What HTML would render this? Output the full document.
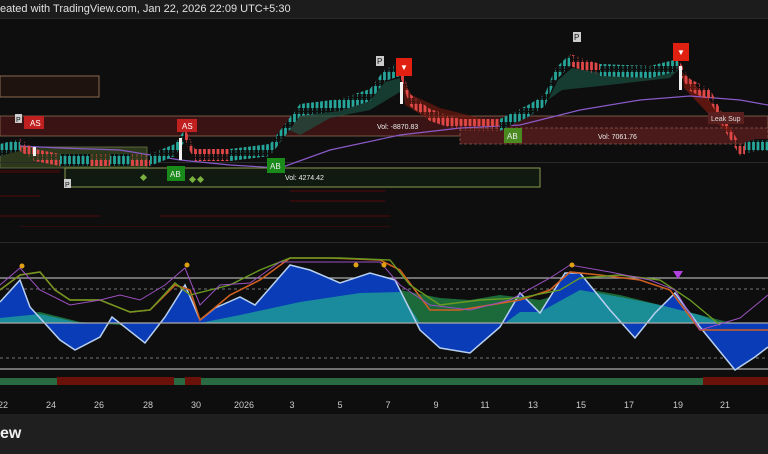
<!DOCTYPE html>
<html><head><meta charset="utf-8"><style>
html,body{margin:0;padding:0;background:#0e0e0e;width:768px;height:454px;overflow:hidden;font-family:"Liberation Sans",sans-serif}
#top{position:absolute;left:0;top:0;width:768px;height:18px;background:#1c1c1c;border-bottom:1px solid #2a2a2a;color:#e0e0e0;font-size:11px;line-height:18px;white-space:nowrap}
#bot{position:absolute;left:0;top:414px;width:768px;height:40px;background:#1f1f1f;color:#f0f0f0;font-weight:bold;font-size:16px}
svg{position:absolute;left:0;top:0}
</style></head><body>
<svg width="768" height="454" viewBox="0 0 768 454">
<defs>
<pattern id="pg" x="0" y="0" width="4.5" height="14" patternUnits="userSpaceOnUse"><rect x="0.6" y="2" width="2.8" height="8" fill="#26a69a"/><rect x="1.7" y="0" width="0.6" height="13" fill="#26a69a"/></pattern>
<pattern id="pr" x="0" y="4" width="4.5" height="14" patternUnits="userSpaceOnUse"><rect x="0.6" y="2" width="2.8" height="8" fill="#e04848"/><rect x="1.7" y="0" width="0.6" height="13" fill="#e04848"/></pattern>
<clipPath id="up"><rect x="0" y="0" width="20" height="240"/><rect x="60" y="0" width="30" height="240"/><rect x="110" y="0" width="20" height="240"/><rect x="150" y="0" width="35" height="240"/><rect x="230" y="0" width="170" height="240"/><rect x="500" y="0" width="70" height="240"/><rect x="600" y="0" width="78" height="240"/><rect x="745" y="0" width="23" height="240"/></clipPath>
<path id="bd" d="M0,144 L20,139 L35,149 L60,154 L100,154 L150,154 L175,144 L185,129 L195,149 L230,149 L270,144 L285,124 L300,104 L340,99 L370,89 L385,69 L400,64 L410,94 L430,109 L460,119 L500,119 L530,104 L545,94 L555,69 L570,54 L600,64 L650,66 L678,59 L690,79 L710,89 L725,119 L740,144 L755,139 L768,139 L768,151 L755,151 L740,156 L725,131 L710,101 L690,91 L678,71 L650,78 L600,76 L570,66 L555,81 L545,106 L530,116 L500,131 L460,131 L430,121 L410,106 L400,76 L385,81 L370,101 L340,111 L300,116 L285,136 L270,156 L230,161 L195,161 L185,141 L175,156 L150,166 L100,166 L60,166 L35,161 L20,151 L0,156Z"/>
</defs>
<rect x="0" y="19" width="768" height="395" fill="#0e0e0e"/>
<rect x="0" y="76" width="99" height="21" fill="#1e130f" stroke="#8a6a50" stroke-width="1"/>
<rect x="0" y="116" width="768" height="20" fill="#3a1414" stroke="#8a6a50" stroke-width="0.8"/>
<rect x="460" y="128" width="308" height="16" fill="#4a1a1a" stroke="#8a5a50" stroke-width="0.8" stroke-dasharray="3,2"/>
<rect x="0" y="147" width="147" height="21" fill="#3a4a22" stroke="#9aa060" stroke-width="0.8" opacity="0.7"/>
<rect x="65" y="168" width="475" height="19" fill="#111a11" stroke="#8a9a50" stroke-width="1"/>
<rect x="0" y="162" width="768" height="1" fill="#2a2a2a"/>
<g fill="#4a0c0c" opacity="0.6">
<rect x="0" y="170" width="60" height="3"/><rect x="0" y="195" width="40" height="2"/><rect x="290" y="190" width="95" height="2"/><rect x="290" y="200" width="95" height="2"/><rect x="0" y="215" width="100" height="2"/><rect x="160" y="215" width="230" height="2"/><rect x="20" y="226" width="370" height="1"/>
</g>
<path d="M285,128 L300,113 L340,108 L370,100 L385,82 L400,78 L400,92 L370,110 L330,118 L300,135Z" fill="#1d5a4a" opacity="0.6"/>
<path d="M402,80 L412,95 L440,108 L480,118 L500,124 L470,126 L430,120 L405,105Z" fill="#6a1a10" opacity="0.7"/>
<path d="M548,100 L558,80 L572,68 L620,76 L678,70 L670,78 L600,86 L562,90Z" fill="#1d5a4a" opacity="0.6"/>
<path d="M682,72 L700,90 L720,112 L735,135 L722,128 L700,105 L684,88Z" fill="#7a1a10" opacity="0.7"/>
<path d="M0,145 L60,148 L120,150 L180,160 L230,165 L280,168 L330,150 L400,135 L460,128 L520,125 L580,110 L640,100 L690,96 L740,100 L768,105" fill="none" stroke="#8a5ac8" stroke-width="1.2"/>
<use href="#bd" fill="url(#pr)"/>
<use href="#bd" fill="#0e0e0e" clip-path="url(#up)"/>
<use href="#bd" fill="url(#pg)" clip-path="url(#up)"/>
<rect x="400" y="82" width="3" height="22" fill="#f0f0f0"/><rect x="679" y="66" width="3" height="24" fill="#f0f0f0"/><rect x="179" y="138" width="3" height="22" fill="#f0f0f0"/><rect x="33" y="147" width="3" height="9" fill="#f0f0f0"/>
<rect x="24" y="116" width="20" height="13" fill="#c02020"/><text x="30" y="126" fill="#fff" font-size="8">AS</text>
<rect x="177" y="119" width="20" height="13" fill="#c02020"/><text x="182" y="129" fill="#fff" font-size="8">AS</text>
<rect x="15" y="114" width="7" height="9" fill="#ccc"/><text x="16" y="122" fill="#111" font-size="7">P</text>
<rect x="64" y="179" width="7" height="9" fill="#ccc"/><text x="65" y="187" fill="#111" font-size="7">P</text>
<rect x="376" y="56" width="8" height="10" fill="#ccc"/><text x="377" y="64" fill="#111" font-size="8">P</text>
<rect x="573" y="32" width="8" height="10" fill="#ccc"/><text x="574" y="40" fill="#111" font-size="8">P</text>
<rect x="167" y="166" width="18" height="15" fill="#1a8a1a"/><text x="170" y="177" fill="#eee" font-size="8">AB</text>
<rect x="267" y="158" width="18" height="15" fill="#1a8a1a"/><text x="270" y="169" fill="#eee" font-size="8">AB</text>
<rect x="504" y="128" width="18" height="15" fill="#4a8a20"/><text x="507" y="139" fill="#eee" font-size="8">AB</text>
<rect x="396" y="58" width="16" height="18" fill="#e02010"/><text x="400" y="70" fill="#fff" font-size="8">▼</text>
<rect x="673" y="43" width="16" height="18" fill="#e02010"/><text x="677" y="55" fill="#fff" font-size="8">▼</text>
<rect x="708" y="112" width="36" height="12" fill="#5a2020"/><text x="711" y="121" fill="#ddd" font-size="7">Leak Sup</text>
<text x="377" y="129" fill="#eee" font-size="7">Vol: -8870.83</text>
<text x="598" y="139" fill="#eee" font-size="7">Vol: 7061.76</text>
<text x="285" y="180" fill="#eee" font-size="7">Vol: 4274.42</text>
<g fill="#7ab040"><rect x="141" y="175" width="5" height="5" transform="rotate(45 143.5 177.5)"/><rect x="190" y="177" width="5" height="5" transform="rotate(45 192.5 179.5)"/><rect x="198" y="177" width="5" height="5" transform="rotate(45 200.5 179.5)"/></g>
<rect x="0" y="242" width="768" height="1" fill="#2a2a2a"/>
<line x1="0" y1="278" x2="768" y2="278" stroke="#aaa" stroke-width="1.2"/>
<line x1="0" y1="289" x2="768" y2="289" stroke="#777" stroke-dasharray="3,3"/>
<line x1="0" y1="358" x2="768" y2="358" stroke="#777" stroke-dasharray="3,3"/>
<line x1="0" y1="369" x2="768" y2="369" stroke="#aaa" stroke-width="1.2"/>
<path d="M0,323 L0,315 L40,312 L80,322 L120,325 L200,322 L240,313 L300,300 L360,293 L400,290 L440,298 L470,300 L500,295 L540,300 L580,288 L620,295 L660,305 L700,315 L740,325 L768,330 L768,323Z" fill="#1c6a3a"/>
<path d="M0,302 L20,280 L30,307 L60,340 L75,350 L100,337 L112,317 L145,343 L165,317 L185,285 L200,320 L215,308 L240,297 L255,305 L290,265 L310,270 L340,283 L370,273 L395,280 L420,330 L440,348 L470,353 L500,327 L520,293 L540,313 L565,273 L580,273 L610,310 L635,338 L655,313 L675,293 L700,327 L735,370 L755,357 L768,347 L768,323 L0,323Z" fill="#0a3cb8"/>
<path d="M0,323 L0,318 L40,314 L80,323Z M200,323 L240,315 L300,302 L360,293 L400,292 L420,323Z M505,323 L520,312 L540,312 L580,290 L620,297 L660,305 L700,315 L720,323Z" fill="#1a8f9a" opacity="0.95"/>
<path d="M0,302 L20,280 L30,307 L60,340 L75,350 L100,337 L112,317 L145,343 L165,317 L185,285 L200,320 L215,308 L240,297 L255,305 L290,265 L310,270 L340,283 L370,273 L395,280 L420,330 L440,348 L470,353 L500,327 L520,293 L540,313 L565,273 L580,273 L610,310 L635,338 L655,313 L675,293 L700,327 L735,370 L755,357 L768,347" fill="none" stroke="#b8d0f0" stroke-width="1.5"/>
<line x1="0" y1="323" x2="768" y2="323" stroke="#aaa" stroke-width="1.2"/>
<path d="M0,290 L20,275 L40,272 L55,290 L70,300 L100,300 L130,312 L150,310 L175,285 L190,290 L200,320 L230,295 L260,280 L290,258 L330,258 L380,260 L400,270 L430,310 L460,310 L520,300 L550,290 L570,272 L600,275 L640,280 L670,290 L700,330 L740,330 L768,330" fill="none" stroke="#d06020" stroke-width="1.6"/>
<path d="M0,290 L20,275 L40,272 L55,290 L70,300 L100,300 L130,312 L150,310 L175,283 L190,295 L230,285 L260,270 L290,258 L340,258 L390,260 L410,285 L440,305 L480,300 L520,298 L560,290 L580,278 L620,275 L660,280 L690,300 L720,325" fill="none" stroke="#6a9a20" stroke-width="1.4"/>
<path d="M0,285 L20,268 L40,290 L70,305 L100,300 L120,295 L140,300 L165,285 L185,268 L200,305 L220,285 L250,283 L280,262 L330,262 L380,262 L400,285 L430,305 L470,310 L510,300 L550,278 L570,265 L610,272 L650,280 L675,290 L700,330 L740,318 L768,295" fill="none" stroke="#9a50c0" stroke-width="1"/>
<g fill="#e0a010"><circle cx="22" cy="266" r="2.5"/><circle cx="187" cy="265" r="2.5"/><circle cx="356" cy="265" r="2.5"/><circle cx="384" cy="265" r="2.5"/><circle cx="572" cy="265" r="2.5"/></g>
<path d="M673,271 L683,271 L678,279Z" fill="#b040e0"/>
<rect x="0" y="378" width="768" height="7" fill="#2a6a42"/>
<rect x="57" y="377" width="117" height="8" fill="#6a120a"/><rect x="185" y="377" width="16" height="8" fill="#6a120a"/><rect x="703" y="377" width="65" height="8" fill="#6a120a"/>
<g fill="#ccc" font-size="9" text-anchor="middle">
<text x="3" y="408">22</text><text x="51" y="408">24</text><text x="99" y="408">26</text><text x="148" y="408">28</text><text x="196" y="408">30</text><text x="244" y="408">2026</text><text x="292" y="408">3</text><text x="340" y="408">5</text><text x="388" y="408">7</text><text x="436" y="408">9</text><text x="485" y="408">11</text><text x="533" y="408">13</text><text x="581" y="408">15</text><text x="629" y="408">17</text><text x="678" y="408">19</text><text x="725" y="408">21</text>
</g>
</svg>
<div id="top">eated with TradingView.com, Jan 22, 2026 22:09 UTC+5:30</div>
<div id="bot"><span style="position:absolute;left:0;top:11px">ew</span></div>
</body></html>
